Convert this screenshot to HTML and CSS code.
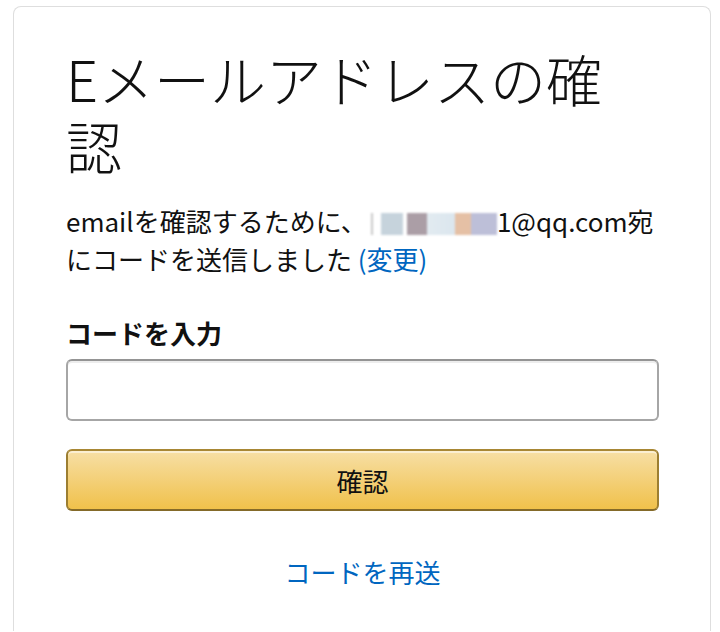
FILE: index.html
```html
<!DOCTYPE html>
<html lang="ja">
<head>
<meta charset="utf-8">
<title>Eメールアドレスの確認</title>
<link rel="stylesheet" href="styles.css">
</head>
<body>
<div class="card">
  <h1 class="title">Eメールアドレスの確認</h1>
  <p class="info">emailを確認するために、<span class="masked" aria-label="masked address"></span>1@qq.com宛にコードを送信しました <a class="link" href="#">(変更)</a></p>
  <form class="form">
    <label class="label" for="code">コードを入力</label>
    <input class="input" id="code" type="text">
    <button class="btn" type="button">確認</button>
  </form>
  <div class="resend"><a class="link" href="#">コードを再送</a></div>
</div>
</body>
</html>
```

FILE: styles.css
```css
html, body {
  margin: 0;
  padding: 0;
  background: #fff;
}
body {
  font-family: "Noto Sans CJK JP", "Noto Sans", sans-serif;
  color: #111;
}
.card {
  margin: 6px 9px 0 13px;
  border: 1px solid #dedede;
  border-bottom: 0;
  border-radius: 8px 8px 0 0;
  padding: 37px 51px 40px 52px;
}
.title {
  margin: 0 0 24px;
  max-width: 580px;
  font-size: 56px;
  line-height: 67px;
  font-weight: 300;
  color: #111;
}
.info {
  margin: 0 0 36px;
  font-size: 26px;
  line-height: 38px;
}
.masked {
  display: inline-block;
  width: 130px;
  height: 22px;
  vertical-align: -3px;
  background: linear-gradient(90deg,
    #fff 0, #fff 4px, #c9c9c9 4px, #c9c9c9 6px, #fff 6px, #fff 14px,
    #c6d3dc 14px, #c6d3dc 36px, #fff 36px, #fff 40px,
    #ab9ea6 40px, #ab9ea6 60px, #e2ebf1 60px, #dbe6ee 88px,
    #e5c0a5 88px, #e5c0a5 104px, #bdbfd8 104px, #bdbfd8 130px);
  filter: blur(1.2px);
}
.link {
  color: #0066c0;
  text-decoration: none;
}
.form {
  display: flex;
  flex-direction: column;
}
.label {
  font-size: 26px;
  line-height: 38px;
  font-weight: 700;
  margin-bottom: 7px;
}
.input {
  box-sizing: border-box;
  height: 62px;
  border: 2px solid #a6a6a6;
  border-top-color: #949494;
  border-radius: 6px;
  box-shadow: inset 0 2px 0 rgba(0,0,0,0.07);
  margin: 0 0 28px;
  font-size: 26px;
  padding: 0 14px;
}
.btn {
  box-sizing: border-box;
  height: 62px;
  border: 2px solid;
  border-color: #a88734 #9c7e31 #846a29;
  border-radius: 6px;
  background: linear-gradient(to bottom, #f7dfa5, #f0c14b);
  box-shadow: inset 0 2px 0 rgba(255,255,255,0.5);
  font-family: "Noto Sans CJK JP", "Noto Sans", sans-serif;
  font-size: 26px;
  color: #111;
  margin: 0 0 42px;
  padding: 0;
}
.resend {
  text-align: center;
  font-size: 26px;
  line-height: 38px;
}
```
